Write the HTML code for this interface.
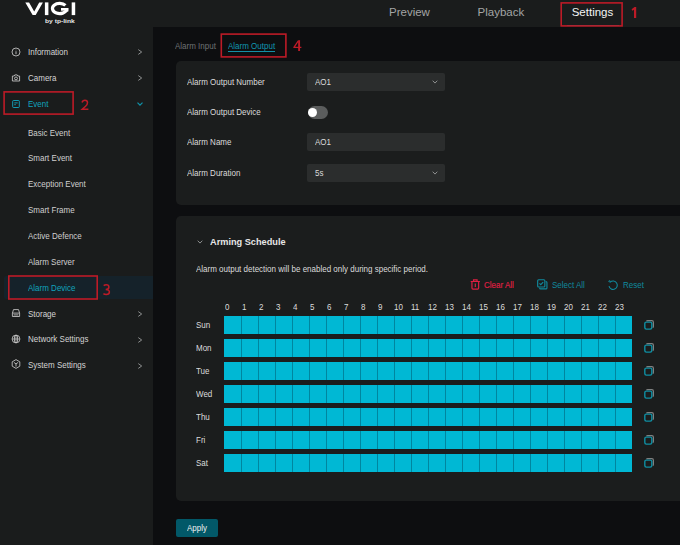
<!DOCTYPE html>
<html>
<head>
<meta charset="utf-8">
<title>VIGI - Alarm Device</title>
<style>
*{box-sizing:border-box;margin:0;padding:0}
html,body{width:680px;height:545px;overflow:hidden;background:#0d0e10}
body{position:relative;font-family:"Liberation Sans",sans-serif;font-size:8px;color:#d2d2d2;-webkit-font-smoothing:antialiased}
.abs{position:absolute}
.t{position:absolute;white-space:nowrap;line-height:10px;height:10px;margin-top:.3px;font-size:8.8px;transform:scaleX(.909);transform-origin:0 50%}
#header{left:0;top:0;width:680px;height:27px;background:#1a1c1c}
#sidebar{left:0;top:27px;width:152.5px;height:518px;background:#1a1c1c}
.nav{margin-top:0;transform:none;font-size:11.5px;line-height:14px;height:14px;color:#a3a5a5}
.red{border:1.4px solid #cf1f2b;position:absolute}
.rnum{position:absolute;color:#d4202c;font-size:14px;line-height:14px;white-space:nowrap}
.m{color:#d4d4d4}
.sub{color:#cfcfcf}
.teal{color:#11a2bc}
.chev{position:absolute}
.panel{position:absolute;background:#1b1d1d;border-radius:5px}
.field{position:absolute;background:#2b2d2d;border-radius:2px;left:307px;width:138px;height:18px}
.lbl{color:#dcdcdc}
.day{color:#dcdcdc}
.hr{color:#dcdcdc}
.row{position:absolute;left:224px;width:408px;height:17.8px;
 background:linear-gradient(#00b8d4,#00b8d4) 0 0/1px 100% no-repeat,
 linear-gradient(to right,rgba(0,60,80,.4) 0,rgba(0,60,80,.4) 1px,transparent 1px) 0 0/17px 100% repeat-x,
 #00b8d4;}
</style>
</head>
<body>
<div id="header" class="abs"></div>
<div id="sidebar" class="abs"></div>

<!-- logo -->
<svg class="abs" style="left:20px;top:0" width="70" height="27" viewBox="20 0 70 27">
 <g fill="#ffffff">
  <polygon points="25.3,2.4 29.1,2.4 34.2,11.4 39.2,2.4 42.9,2.4 35.7,15.1 32.6,15.1"/>
  <rect x="44.9" y="2.4" width="3.5" height="12.7"/>
  <rect x="71.7" y="2.4" width="3.5" height="12.7"/>
  <rect x="61.0" y="8.0" width="7.3" height="2.7"/>
  <rect x="65.3" y="8.0" width="3.0" height="3.6"/>
 </g>
 <path d="M 65.4 5.45 A 7.15 5.15 0 1 0 66.6 9.6" fill="none" stroke="#ffffff" stroke-width="3.2"/>
</svg>
<div class="t" style="left:45px;top:15.7px;font-size:5px;font-weight:bold;color:#e6e6e6;transform:scaleX(1.34)">by tp-link</div>

<!-- header nav -->
<div class="t nav" style="left:389px;top:4.6px">Preview</div>
<div class="t nav" style="left:477.6px;top:4.6px">Playback</div>
<div class="t nav" style="left:571.7px;top:4.6px;color:#f4f4f4">Settings</div>
<div class="abs" style="left:567px;top:24.8px;width:51.5px;height:1.6px;background:#1390a6"></div>
<div class="abs" style="left:3.5px;top:275.8px;width:149px;height:22.8px;background:#15222a;border-radius:2px 0 0 2px"></div>
<div class="t m" style="left:28.3px;top:46.80px">Information</div>
<svg class="abs" style="left:136px;top:48.40px" width="8" height="8" viewBox="0 0 8 8"><path d="M2.3 1.6 L5.7 4 L2.3 6.4" fill="none" stroke="#8e9090" stroke-width="1"/></svg>
<div class="t m" style="left:28.3px;top:72.65px">Camera</div>
<svg class="abs" style="left:136px;top:74.25px" width="8" height="8" viewBox="0 0 8 8"><path d="M2.3 1.6 L5.7 4 L2.3 6.4" fill="none" stroke="#8e9090" stroke-width="1"/></svg>
<div class="t teal" style="left:28.3px;top:98.50px">Event</div>
<svg class="abs" style="left:136.3px;top:99.7px" width="8" height="8" viewBox="0 0 8 8"><path d="M1.5 2.6 L4 5.2 L6.5 2.6" fill="none" stroke="#0f93aa" stroke-width="1.2"/></svg>
<div class="t m" style="left:28.3px;top:308.25px">Storage</div>
<svg class="abs" style="left:136px;top:309.85px" width="8" height="8" viewBox="0 0 8 8"><path d="M2.3 1.6 L5.7 4 L2.3 6.4" fill="none" stroke="#8e9090" stroke-width="1"/></svg>
<div class="t m" style="left:28.3px;top:334.10px">Network Settings</div>
<svg class="abs" style="left:136px;top:335.70px" width="8" height="8" viewBox="0 0 8 8"><path d="M2.3 1.6 L5.7 4 L2.3 6.4" fill="none" stroke="#8e9090" stroke-width="1"/></svg>
<div class="t m" style="left:28.3px;top:359.95px">System Settings</div>
<svg class="abs" style="left:136px;top:361.55px" width="8" height="8" viewBox="0 0 8 8"><path d="M2.3 1.6 L5.7 4 L2.3 6.4" fill="none" stroke="#8e9090" stroke-width="1"/></svg>
<div class="t sub" style="left:28.3px;top:127.30px">Basic Event</div>
<div class="t sub" style="left:28.3px;top:153.15px">Smart Event</div>
<div class="t sub" style="left:28.3px;top:179.00px">Exception Event</div>
<div class="t sub" style="left:28.3px;top:204.85px">Smart Frame</div>
<div class="t sub" style="left:28.3px;top:230.70px">Active Defence</div>
<div class="t sub" style="left:28.3px;top:256.55px">Alarm Server</div>
<div class="t teal" style="left:28.3px;top:282.40px">Alarm Device</div>
<svg class="abs" style="left:10px;top:46.1px" width="12" height="12" viewBox="0 0 12 12" fill="none" stroke="#c9c9c9" stroke-width="0.85"><circle cx="6" cy="6" r="4"/><path d="M6 5.3 V8.2" stroke-width="0.9"/><circle cx="6" cy="3.9" r="0.45" fill="#c9c9c9" stroke="none"/></svg>
<svg class="abs" style="left:10px;top:72.3px" width="12" height="12" viewBox="0 0 12 12" fill="none" stroke="#c9c9c9" stroke-width="0.85"><path d="M2.4 4.0 H4.2 L4.8 2.9 H7.2 L7.8 4.0 H9.6 V9.0 H2.4 Z"/><circle cx="6" cy="6.4" r="1.45"/></svg>
<svg class="abs" style="left:10px;top:97.75px" width="12" height="12" viewBox="0 0 12 12" fill="none" stroke="#12a9c4" stroke-width="0.9"><rect x="2.7" y="2.5" width="6.6" height="7" rx="0.8"/><path d="M4.3 4.9 H7.7 M4.3 6.7 H5.8"/></svg>
<svg class="abs" style="left:10px;top:307.1px" width="12" height="12" viewBox="0 0 12 12" fill="none" stroke="#c9c9c9" stroke-width="0.85"><path d="M2.4 6.1 L3.5 2.6 H8.5 L9.6 6.1 V9.5 H2.4 Z M2.4 6.1 H9.6 M3.6 7.9 H8.4"/></svg>
<svg class="abs" style="left:10px;top:333.0px" width="12" height="12" viewBox="0 0 12 12" fill="none" stroke="#c9c9c9" stroke-width="0.85"><circle cx="6" cy="6" r="3.9"/><ellipse cx="6" cy="6" rx="1.7" ry="3.9"/><path d="M2.1 6 H9.9 M6 2.1 V9.9" stroke-width="0.7"/></svg>
<svg class="abs" style="left:10px;top:358.4px" width="12" height="12" viewBox="0 0 12 12" fill="none" stroke="#c9c9c9" stroke-width="0.85"><path d="M6 1.6 L9.8 3.8 V8.2 L6 10.4 L2.2 8.2 V3.8 Z"/><path d="M3.9 4.4 L6 5.9 L8.1 4.4 M6 5.9 V8.6"/></svg>
<div class="t" style="left:174.9px;top:40.4px;color:#6e7274">Alarm Input</div>
<div class="t" style="left:228px;top:40.4px;color:#1197b0">Alarm Output</div>
<div class="abs" style="left:228px;top:51px;width:47px;height:1.2px;background:#1390a6"></div>
<div class="panel" style="left:175.6px;top:61.3px;width:520px;height:143.4px"></div>
<div class="t lbl" style="left:187px;top:76.80px">Alarm Output Number</div>
<div class="t lbl" style="left:187px;top:107.10px">Alarm Output Device</div>
<div class="t lbl" style="left:187px;top:137.10px">Alarm Name</div>
<div class="t lbl" style="left:187px;top:167.40px">Alarm Duration</div>
<div class="field" style="top:73px"></div>
<div class="t lbl" style="left:314.6px;top:76.8px">AO1</div>
<svg class="abs" style="left:431.3px;top:78.2px" width="8" height="8" viewBox="0 0 8 8"><path d="M1.7 2.7 L4 5.1 L6.3 2.7" fill="none" stroke="#8e9090" stroke-width="1"/></svg>
<div class="abs" style="left:307.5px;top:106px;width:20.6px;height:13px;border-radius:6.5px;background:#5b5d5d"></div>
<div class="abs" style="left:308.3px;top:108px;width:9px;height:9px;border-radius:50%;background:#ffffff"></div>
<div class="field" style="top:133.2px"></div>
<div class="t lbl" style="left:314.6px;top:137.1px">AO1</div>
<div class="field" style="top:163.6px"></div>
<div class="t lbl" style="left:314.6px;top:167.4px">5s</div>
<svg class="abs" style="left:431.3px;top:168.8px" width="8" height="8" viewBox="0 0 8 8"><path d="M1.7 2.7 L4 5.1 L6.3 2.7" fill="none" stroke="#8e9090" stroke-width="1"/></svg>
<div class="panel" style="left:175.6px;top:216.3px;width:520px;height:284.9px"></div>
<svg class="abs" style="left:195.8px;top:237.8px" width="8" height="8" viewBox="0 0 8 8"><path d="M1.7 2.7 L4 5.1 L6.3 2.7" fill="none" stroke="#8e9090" stroke-width="1"/></svg>
<div class="t" style="left:209.5px;top:236.1px;font-size:9.6px;line-height:11px;height:11px;font-weight:bold;color:#e6e6e6;transform:scaleX(.958)">Arming Schedule</div>
<div class="t lbl" style="left:196.2px;top:264.1px">Alarm output detection will be enabled only during specific period.</div>
<svg class="abs" style="left:468.7px;top:277.9px" width="12.6" height="12.6" viewBox="0 0 12 12" fill="none" stroke="#de1f42" stroke-width="1.1"><path d="M1.6 3.3 H10.4 M4.3 3.2 V1.8 H7.7 V3.2 M2.8 3.4 V9.6 Q2.8 10.6 3.8 10.6 H8.2 Q9.2 10.6 9.2 9.6 V3.4 M6 5.3 V8.6"/></svg>
<div class="t" style="left:484.1px;top:279.8px;color:#de1f42;-webkit-text-stroke:.2px #de1f42">Clear All</div>
<svg class="abs" style="left:535.8px;top:277.9px" width="12.5" height="12.5" viewBox="0 0 12 12" fill="none" stroke="#108a9e" stroke-width="1.1"><rect x="1.6" y="1.7" width="6.9" height="6.9" rx="0.9"/><path d="M3.3 5.1 L4.6 6.4 L6.9 3.9"/><path d="M9.3 3.5 H9.6 Q10.5 3.5 10.5 4.4 V9.6 Q10.5 10.5 9.6 10.5 H4.4 Q3.5 10.5 3.5 9.6 V9.3"/></svg>
<div class="t" style="left:551.6px;top:279.8px;color:#108a9e">Select All</div>
<svg class="abs" style="left:607px;top:279px" width="12" height="12" viewBox="0 0 12 12" fill="none" stroke="#108a9e" stroke-width="1.1"><path d="M3.2 3.2 A4.2 4.2 0 1 1 2.0 7.2"/><path d="M1.2 2.2 L3.3 3.3 L2.5 1.0" stroke-width="0.8"/></svg>
<div class="t" style="left:622.6px;top:279.8px;color:#108a9e">Reset</div>
<div class="t hr" style="left:224.5px;top:301.4px">0</div>
<div class="t hr" style="left:241.5px;top:301.4px">1</div>
<div class="t hr" style="left:258.5px;top:301.4px">2</div>
<div class="t hr" style="left:275.5px;top:301.4px">3</div>
<div class="t hr" style="left:292.5px;top:301.4px">4</div>
<div class="t hr" style="left:309.5px;top:301.4px">5</div>
<div class="t hr" style="left:326.5px;top:301.4px">6</div>
<div class="t hr" style="left:343.5px;top:301.4px">7</div>
<div class="t hr" style="left:360.5px;top:301.4px">8</div>
<div class="t hr" style="left:377.5px;top:301.4px">9</div>
<div class="t hr" style="left:393.8px;top:301.4px">10</div>
<div class="t hr" style="left:410.8px;top:301.4px">11</div>
<div class="t hr" style="left:427.8px;top:301.4px">12</div>
<div class="t hr" style="left:444.8px;top:301.4px">13</div>
<div class="t hr" style="left:461.8px;top:301.4px">14</div>
<div class="t hr" style="left:478.8px;top:301.4px">15</div>
<div class="t hr" style="left:495.8px;top:301.4px">16</div>
<div class="t hr" style="left:512.8px;top:301.4px">17</div>
<div class="t hr" style="left:529.8px;top:301.4px">18</div>
<div class="t hr" style="left:546.8px;top:301.4px">19</div>
<div class="t hr" style="left:563.8px;top:301.4px">20</div>
<div class="t hr" style="left:580.8px;top:301.4px">21</div>
<div class="t hr" style="left:597.8px;top:301.4px">22</div>
<div class="t hr" style="left:614.8px;top:301.4px">23</div>
<div class="t day" style="left:196px;top:320.2px">Sun</div>
<div class="row" style="top:316.2px"></div>
<svg class="abs" style="left:643px;top:319.2px" width="12" height="12" viewBox="0 0 12 12" fill="none" stroke-width="1"><path d="M3.5 2.3 Q3.8 1.7 4.7 1.7 H8.9 Q10.4 1.7 10.4 3.2 V7.5 Q10.4 8.3 9.7 8.6" stroke="#7f8181" stroke-width="1.2"/><rect x="1.8" y="3.1" width="7" height="7" rx="1.5" stroke="#0f8ea2" stroke-width="1.4"/></svg>
<div class="t day" style="left:196px;top:343.2px">Mon</div>
<div class="row" style="top:339.2px"></div>
<svg class="abs" style="left:643px;top:342.2px" width="12" height="12" viewBox="0 0 12 12" fill="none" stroke-width="1"><path d="M3.5 2.3 Q3.8 1.7 4.7 1.7 H8.9 Q10.4 1.7 10.4 3.2 V7.5 Q10.4 8.3 9.7 8.6" stroke="#7f8181" stroke-width="1.2"/><rect x="1.8" y="3.1" width="7" height="7" rx="1.5" stroke="#0f8ea2" stroke-width="1.4"/></svg>
<div class="t day" style="left:196px;top:366.2px">Tue</div>
<div class="row" style="top:362.2px"></div>
<svg class="abs" style="left:643px;top:365.2px" width="12" height="12" viewBox="0 0 12 12" fill="none" stroke-width="1"><path d="M3.5 2.3 Q3.8 1.7 4.7 1.7 H8.9 Q10.4 1.7 10.4 3.2 V7.5 Q10.4 8.3 9.7 8.6" stroke="#7f8181" stroke-width="1.2"/><rect x="1.8" y="3.1" width="7" height="7" rx="1.5" stroke="#0f8ea2" stroke-width="1.4"/></svg>
<div class="t day" style="left:196px;top:389.2px">Wed</div>
<div class="row" style="top:385.2px"></div>
<svg class="abs" style="left:643px;top:388.2px" width="12" height="12" viewBox="0 0 12 12" fill="none" stroke-width="1"><path d="M3.5 2.3 Q3.8 1.7 4.7 1.7 H8.9 Q10.4 1.7 10.4 3.2 V7.5 Q10.4 8.3 9.7 8.6" stroke="#7f8181" stroke-width="1.2"/><rect x="1.8" y="3.1" width="7" height="7" rx="1.5" stroke="#0f8ea2" stroke-width="1.4"/></svg>
<div class="t day" style="left:196px;top:412.2px">Thu</div>
<div class="row" style="top:408.2px"></div>
<svg class="abs" style="left:643px;top:411.2px" width="12" height="12" viewBox="0 0 12 12" fill="none" stroke-width="1"><path d="M3.5 2.3 Q3.8 1.7 4.7 1.7 H8.9 Q10.4 1.7 10.4 3.2 V7.5 Q10.4 8.3 9.7 8.6" stroke="#7f8181" stroke-width="1.2"/><rect x="1.8" y="3.1" width="7" height="7" rx="1.5" stroke="#0f8ea2" stroke-width="1.4"/></svg>
<div class="t day" style="left:196px;top:435.2px">Fri</div>
<div class="row" style="top:431.2px"></div>
<svg class="abs" style="left:643px;top:434.2px" width="12" height="12" viewBox="0 0 12 12" fill="none" stroke-width="1"><path d="M3.5 2.3 Q3.8 1.7 4.7 1.7 H8.9 Q10.4 1.7 10.4 3.2 V7.5 Q10.4 8.3 9.7 8.6" stroke="#7f8181" stroke-width="1.2"/><rect x="1.8" y="3.1" width="7" height="7" rx="1.5" stroke="#0f8ea2" stroke-width="1.4"/></svg>
<div class="t day" style="left:196px;top:458.2px">Sat</div>
<div class="row" style="top:454.2px"></div>
<svg class="abs" style="left:643px;top:457.2px" width="12" height="12" viewBox="0 0 12 12" fill="none" stroke-width="1"><path d="M3.5 2.3 Q3.8 1.7 4.7 1.7 H8.9 Q10.4 1.7 10.4 3.2 V7.5 Q10.4 8.3 9.7 8.6" stroke="#7f8181" stroke-width="1.2"/><rect x="1.8" y="3.1" width="7" height="7" rx="1.5" stroke="#0f8ea2" stroke-width="1.4"/></svg>
<div class="abs" style="left:175.6px;top:518.7px;width:42.5px;height:18.1px;background:#025868;border-radius:2px"></div>
<div class="t" style="left:187.1px;top:522.8px;color:#f0f0f0">Apply</div>
<svg id="anno" class="abs" style="left:0;top:0" width="680" height="545" viewBox="0 0 680 545" fill="none" stroke="#bd1b27" stroke-width="1.6">
 <rect x="561.2" y="2.9" width="60.9" height="23"/>
 <rect x="4.1" y="91.9" width="69" height="22.2"/>
 <rect x="8.8" y="276.0" width="88.4" height="23.0"/>
 <rect x="221.3" y="34.1" width="64.6" height="22.8"/>
 <path d="M631.6 9.3 L634.5 7.1 H636.2 V18.1 H634.0 V9.7 L632.3 10.8 Z" fill="#bd1b27" stroke="none"/>
 <path d="M82.1 102.5 Q82.6 100.3 84.9 100.3 Q87.5 100.3 87.5 102.7 Q87.5 104.4 85.6 106.2 L82.2 109.3 H88.4" stroke-width="1.5"/>
 <path d="M103.7 285.6 Q104.7 284.7 106.3 284.7 Q108.9 284.7 108.9 286.9 Q108.9 289.3 105.7 289.4 Q109.4 289.5 109.4 292.0 Q109.4 294.5 106.3 294.5 Q104.5 294.5 103.4 293.7" stroke-width="1.5"/>
 <path d="M299.1 51 V40.2" stroke-width="1.9"/><path d="M298.3 40.9 L293.9 47.4 H301.4" stroke-width="1.3" stroke-linejoin="round"/>
</svg>
</body>
</html>
